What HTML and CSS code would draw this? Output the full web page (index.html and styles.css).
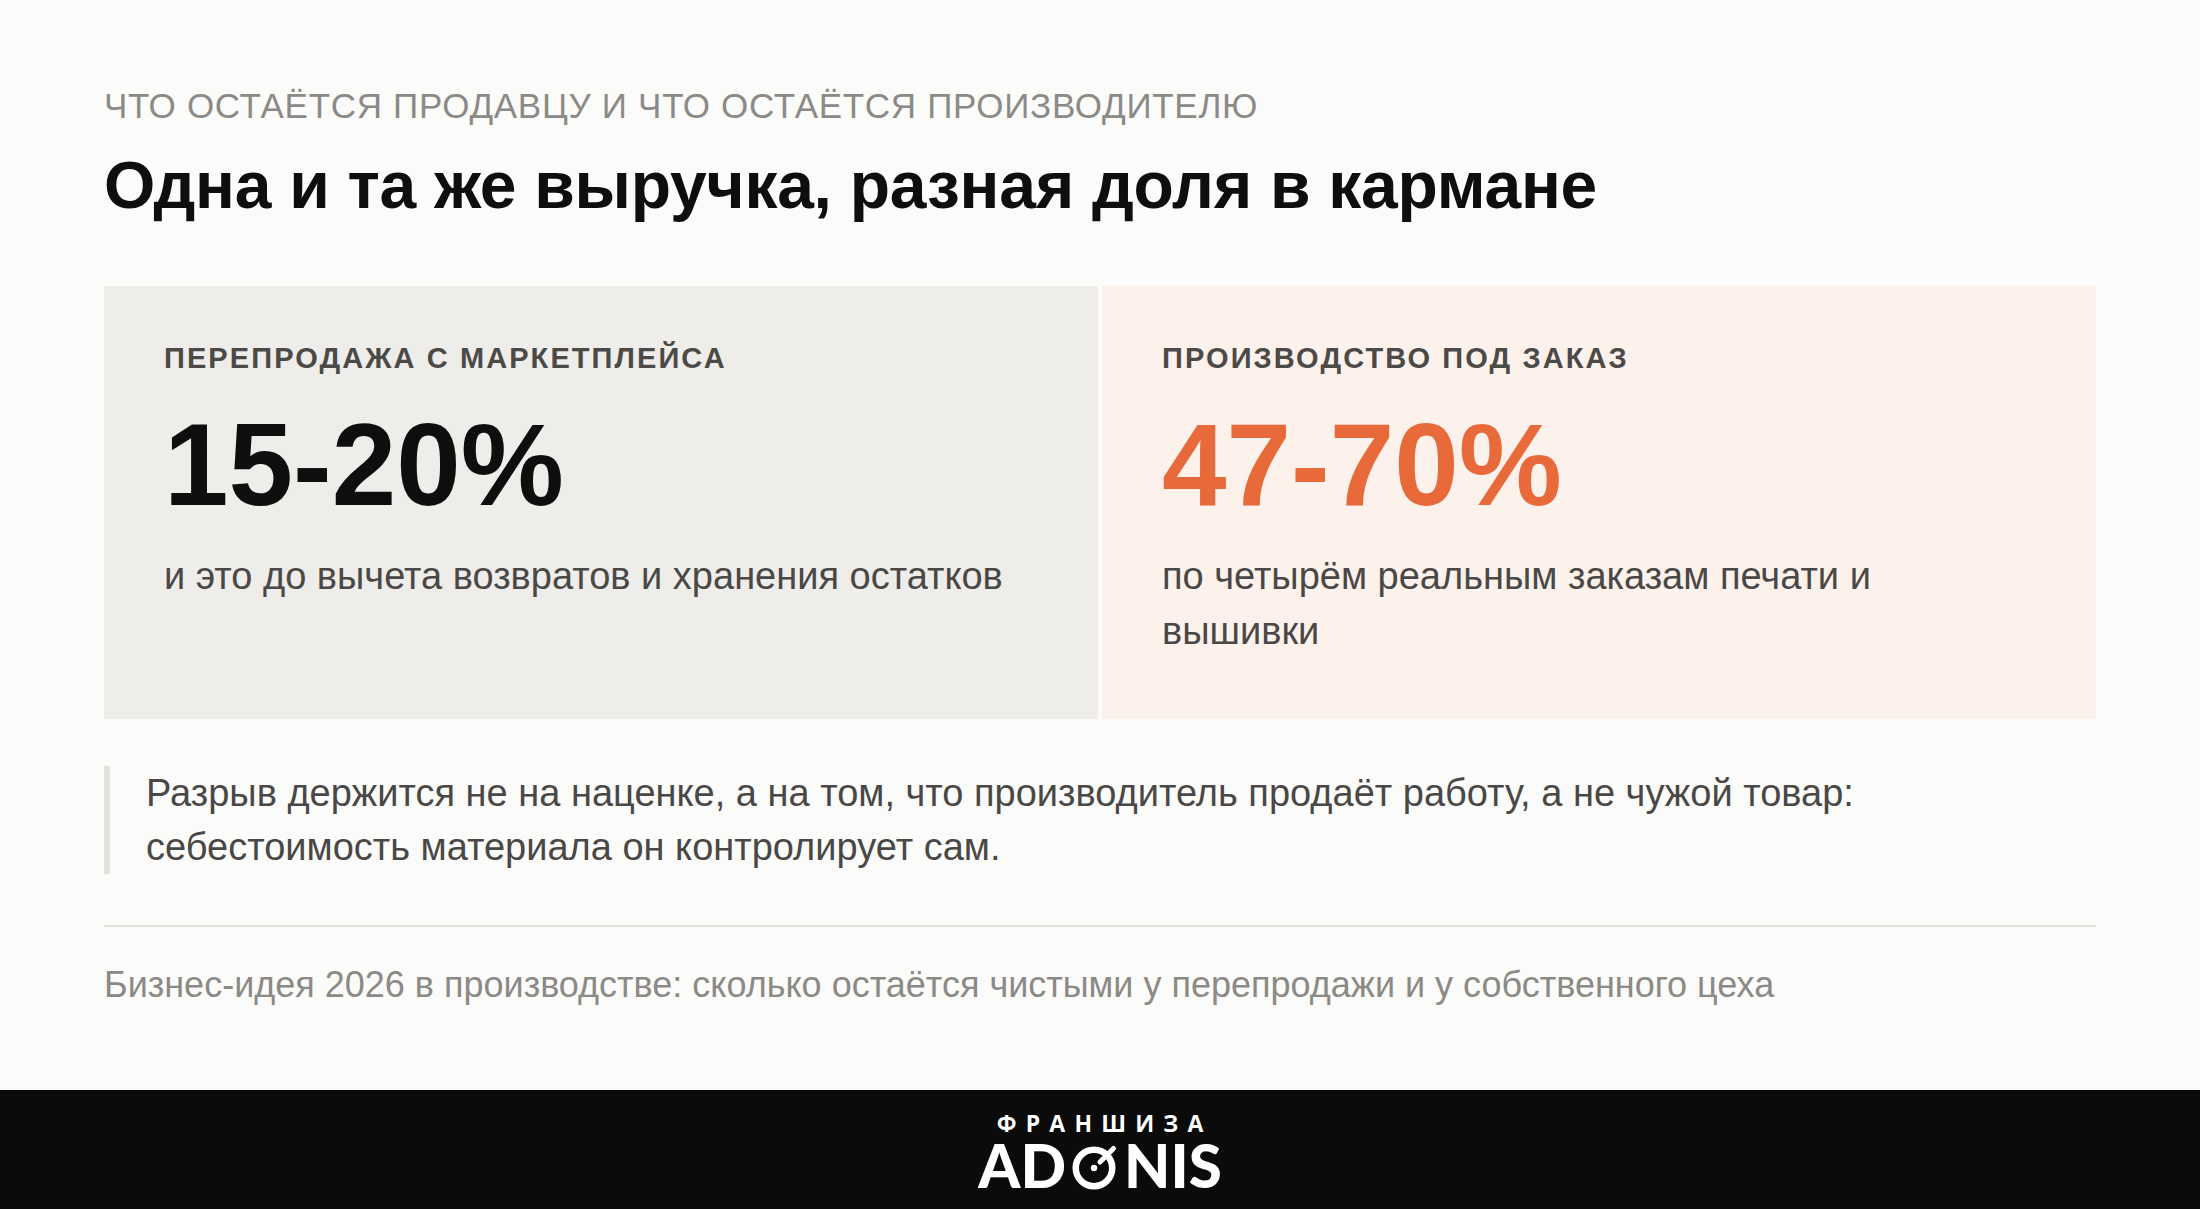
FILE: index.html
```html
<!DOCTYPE html>
<html lang="ru">
<head>
<meta charset="utf-8">
<title>Одна и та же выручка, разная доля в кармане</title>
<link rel="stylesheet" href="styles.css">
</head>
<body>
<div class="page">
  <main class="content">
    <p class="eyebrow">ЧТО ОСТАЁТСЯ ПРОДАВЦУ И ЧТО ОСТАЁТСЯ ПРОИЗВОДИТЕЛЮ</p>
    <h1 class="title">Одна и та же выручка, разная доля в кармане</h1>
    <section class="cards">
      <div class="card card-resale">
        <div class="card-label">ПЕРЕПРОДАЖА С МАРКЕТПЛЕЙСА</div>
        <div class="card-value">15-20%</div>
        <p class="card-text">и это до вычета возвратов и хранения остатков</p>
      </div>
      <div class="card card-production">
        <div class="card-label">ПРОИЗВОДСТВО ПОД ЗАКАЗ</div>
        <div class="card-value accent">47-70%</div>
        <p class="card-text">по четырём реальным заказам печати и вышивки</p>
      </div>
    </section>
    <blockquote class="note">Разрыв держится не на наценке, а на том, что производитель продаёт работу, а не чужой товар: себестоимость материала он контролирует сам.</blockquote>
    <hr class="divider">
    <p class="caption">Бизнес-идея 2026 в производстве: сколько остаётся чистыми у перепродажи и у собственного цеха</p>
  </main>
  <footer class="footer">
    <div class="brand">
      <div class="brand-top">ФРАНШИЗА</div>
      <div class="brand-name">AD<svg class="brand-o" width="46" height="48" viewBox="0 0 46 48" aria-hidden="true"><circle cx="22" cy="25" r="18.25" fill="none" stroke="#fff" stroke-width="6.5"/><circle cx="22" cy="25" r="3.2" fill="#fff"/><line x1="28" y1="19" x2="41.5" y2="5.5" stroke="#fff" stroke-width="5" stroke-linecap="round"/></svg>NIS</div>
    </div>
  </footer>
</div>
</body>
</html>
```

FILE: styles.css
```css
* { box-sizing: border-box; }

html, body {
  margin: 0;
  padding: 0;
}

body {
  background: #fbfbf9;
  font-family: "Liberation Sans", Arial, sans-serif;
  color: #0e0e0e;
}

.page {
  display: flex;
  flex-direction: column;
  height: 100vh;
}

.content {
  flex: 1;
  padding: 86px 104px 0;
}

.eyebrow {
  margin: 0;
  font-size: 35px;
  line-height: 40px;
  color: #8b8a86;
  letter-spacing: 0.02em;
}

.title {
  margin: 21px 0 0;
  font-size: 66px;
  line-height: 76px;
  font-weight: 700;
  color: #0e0e0e;
  letter-spacing: -0.004em;
}

.cards {
  display: grid;
  grid-template-columns: 1fr 1fr;
  gap: 4px;
  margin-top: 63px;
}

.card {
  padding: 55px 60px 60px;
}

.card-resale {
  background: #efede9;
}

.card-production {
  background: #fdf1ec;
}

.card-label {
  font-size: 29px;
  line-height: 34px;
  font-weight: 700;
  letter-spacing: 0.072em;
  color: #4b4a47;
}

.card-value {
  margin-top: 32px;
  font-size: 116px;
  line-height: 116px;
  font-weight: 700;
  color: #0e0e0e;
}

.card-value.accent {
  color: #e8693a;
}

.card-text {
  margin: 26px 0 0;
  max-width: 860px;
  font-size: 38px;
  line-height: 55px;
  color: #4a4846;
}

.note {
  margin: 47px 0 0;
  padding-left: 36px;
  border-left: 6px solid #e4e1db;
  font-size: 38px;
  line-height: 54px;
  color: #4a4846;
}

.divider {
  margin: 51px 0 0;
  border: 0;
  border-top: 2px solid #e4e2dd;
}

.caption {
  margin: 38px 0 0;
  font-size: 36px;
  line-height: 40px;
  color: #8b8a86;
}

.footer {
  height: 119px;
  flex: none;
  background: #0b0b0b;
  display: flex;
  justify-content: center;
  padding-top: 22px;
}

.brand {
  display: flex;
  flex-direction: column;
  align-items: center;
  color: #fff;
}

.brand-top {
  font-family: "Open Sans", "DejaVu Sans", sans-serif;
  font-weight: 700;
  font-size: 23px;
  line-height: 22px;
  letter-spacing: 0.4em;
  margin-right: -0.4em;
}

.brand-name {
  margin-top: 1px;
  font-family: Lato, "Open Sans", sans-serif;
  font-weight: 900;
  font-size: 60px;
  line-height: 60px;
  white-space: nowrap;
}

.brand-o {
  display: inline-block;
  vertical-align: -3px;
  margin: 0 6px 0 6px;
}
```
